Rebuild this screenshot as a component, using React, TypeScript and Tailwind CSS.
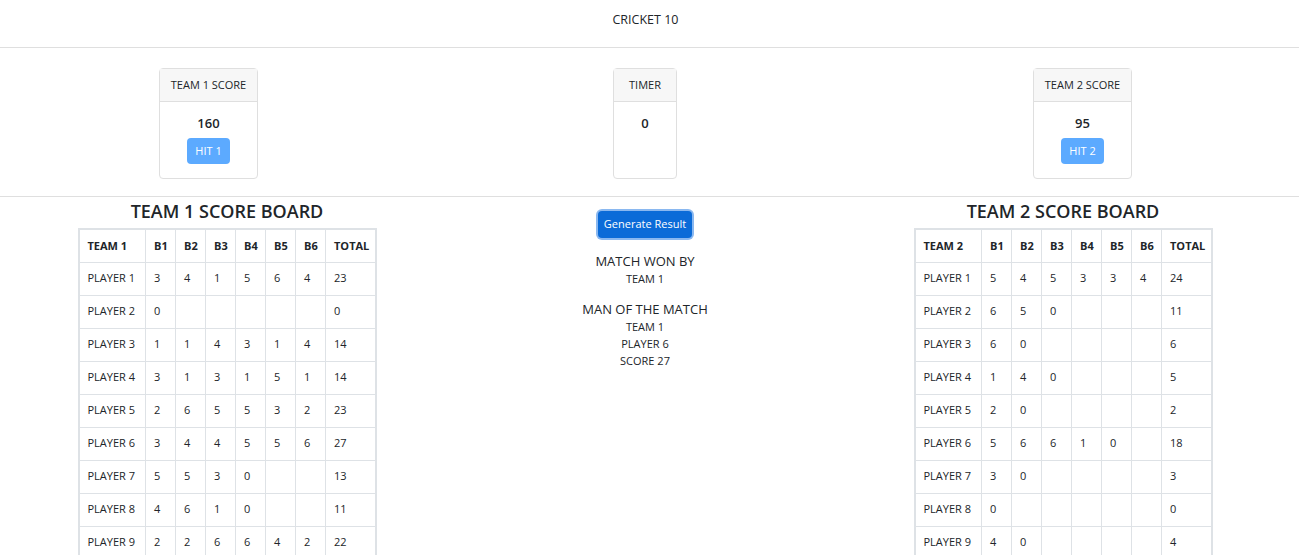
import React from 'react';

type Row = { name: string; balls: (number | null)[]; total: number };

const team1: Row[] = [
  { name: 'PLAYER 1', balls: [3, 4, 1, 5, 6, 4], total: 23 },
  { name: 'PLAYER 2', balls: [0, null, null, null, null, null], total: 0 },
  { name: 'PLAYER 3', balls: [1, 1, 4, 3, 1, 4], total: 14 },
  { name: 'PLAYER 4', balls: [3, 1, 3, 1, 5, 1], total: 14 },
  { name: 'PLAYER 5', balls: [2, 6, 5, 5, 3, 2], total: 23 },
  { name: 'PLAYER 6', balls: [3, 4, 4, 5, 5, 6], total: 27 },
  { name: 'PLAYER 7', balls: [5, 5, 3, 0, null, null], total: 13 },
  { name: 'PLAYER 8', balls: [4, 6, 1, 0, null, null], total: 11 },
  { name: 'PLAYER 9', balls: [2, 2, 6, 6, 4, 2], total: 22 },
  { name: 'PLAYER 10', balls: [1, 0, null, null, null, null], total: 1 },
];

const team2: Row[] = [
  { name: 'PLAYER 1', balls: [5, 4, 5, 3, 3, 4], total: 24 },
  { name: 'PLAYER 2', balls: [6, 5, 0, null, null, null], total: 11 },
  { name: 'PLAYER 3', balls: [6, 0, null, null, null, null], total: 6 },
  { name: 'PLAYER 4', balls: [1, 4, 0, null, null, null], total: 5 },
  { name: 'PLAYER 5', balls: [2, 0, null, null, null, null], total: 2 },
  { name: 'PLAYER 6', balls: [5, 6, 6, 1, 0, null], total: 18 },
  { name: 'PLAYER 7', balls: [3, 0, null, null, null, null], total: 3 },
  { name: 'PLAYER 8', balls: [0, null, null, null, null, null], total: 0 },
  { name: 'PLAYER 9', balls: [4, 0, null, null, null, null], total: 4 },
  { name: 'PLAYER 10', balls: [0, null, null, null, null, null], total: 0 },
];

function ScoreCard({ title, score, hit, wide }: { title: string; score: number; hit?: string; wide?: boolean }) {
  return (
    <div className="flex h-[111px] flex-col rounded border border-[#dfdfdf] bg-white">
      <div
        className={`flex h-[33px] items-center justify-center border-b border-[#dfdfdf] bg-[#f7f7f7] pt-[1px] text-[11px] ${
          wide ? 'px-[15px]' : 'px-[11px]'
        }`}
      >
        {title}
      </div>
      <div className="flex flex-col items-center pt-[13px]">
        <div className="text-[13px] leading-[16px] font-semibold">{score}</div>
        {hit && (
          <button className="mt-[7px] h-[26px] rounded bg-[#5caaff] px-[8px] text-[11px] text-white">
            {hit}
          </button>
        )}
      </div>
    </div>
  );
}

const cell = 'border border-[#dee2e6] px-2 whitespace-nowrap overflow-hidden';

function ScoreBoard({ team, rows }: { team: string; rows: Row[] }) {
  return (
    <div className="flex flex-col items-center">
      <h2 className="h-[31px] text-[18px] leading-[28px] font-semibold text-[#212529]">
        {team} SCORE BOARD
      </h2>
      <table className="w-[297px] table-fixed border-collapse border-2 border-[#dee2e6] text-[11px] text-[#212529]">
        <colgroup>
          <col className="w-[67px]" />
          <col className="w-[30px]" />
          <col className="w-[30px]" />
          <col className="w-[30px]" />
          <col className="w-[30px]" />
          <col className="w-[30px]" />
          <col className="w-[30px]" />
          <col className="w-[50px]" />
        </colgroup>
        <thead>
          <tr className="h-[33px]">
            <th className={`${cell} text-left font-bold`}>{team}</th>
            {['B1', 'B2', 'B3', 'B4', 'B5', 'B6'].map((b) => (
              <th key={b} className={`${cell} text-left font-bold`}>
                {b}
              </th>
            ))}
            <th className={`${cell} text-left font-bold`}>TOTAL</th>
          </tr>
        </thead>
        <tbody>
          {rows.map((r) => (
            <tr key={r.name} className="h-[33px]">
              <td className={cell}>{r.name}</td>
              {r.balls.map((b, i) => (
                <td key={i} className={cell}>
                  {b ?? ''}
                </td>
              ))}
              <td className={cell}>{r.total}</td>
            </tr>
          ))}
        </tbody>
      </table>
    </div>
  );
}

export default function App() {
  return (
    <div className="min-h-screen bg-white font-['Open_Sans',sans-serif] text-[#212529]">
      <header className="flex h-[48px] items-center justify-center border-b border-[#dfdfdf] pb-[8px] pt-[2px] pr-[8px] text-[12.5px] font-medium">
        CRICKET 10
      </header>

      <div className="grid grid-cols-[417px_456px_419px] border-b border-[#dfdfdf] pb-[17px] pt-[20px]">
        <div className="flex justify-center">
          <ScoreCard title="TEAM 1 SCORE" score={160} hit="HIT 1" />
        </div>
        <div className="flex justify-center">
          <ScoreCard title="TIMER" score={0} wide />
        </div>
        <div className="flex justify-center">
          <ScoreCard title="TEAM 2 SCORE" score={95} hit="HIT 2" />
        </div>
      </div>

      <div className="grid grid-cols-[418px_418px_418px] pl-[18px]">
        <ScoreBoard team="TEAM 1" rows={team1} />
        <div className="flex flex-col items-center pt-[14px] text-center">
          <button className="h-[27px] rounded bg-[#0b6bd8] px-[6px] text-[11px] text-white ring-2 ring-[#8ab8f0]">
            Generate Result
          </button>
          <div className="mt-[15px] text-[13px] leading-[17px]">MATCH WON BY</div>
          <div className="text-[11px] leading-[17px]">TEAM 1</div>
          <div className="mt-[14px] text-[13px] leading-[17px]">MAN OF THE MATCH</div>
          <div className="text-[11px] leading-[17px]">TEAM 1</div>
          <div className="text-[11px] leading-[17px]">PLAYER 6</div>
          <div className="text-[11px] leading-[17px]">SCORE 27</div>
        </div>
        <ScoreBoard team="TEAM 2" rows={team2} />
      </div>
    </div>
  );
}
